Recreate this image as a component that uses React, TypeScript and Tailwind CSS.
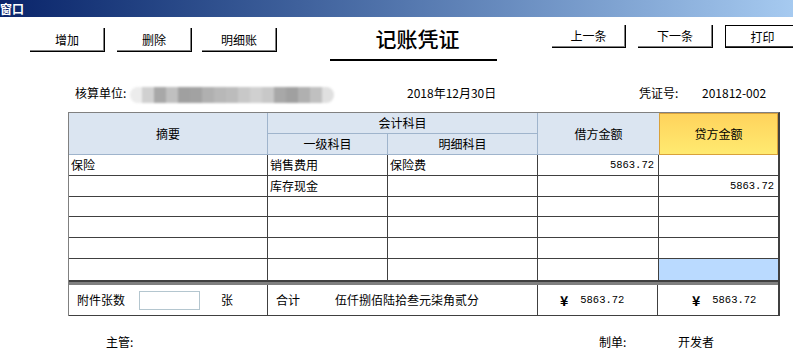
import React from "react";

const blurBlocks = [
  "#ececec", "#d0d0d0", "#a8a8a8", "#c0c0c0", "#a0a0a0", "#a2a2a2", "#b0b0b0", "#b8b8b8",
  "#bcbcbc", "#c8c8c8", "#d0d0d0", "#c8c8c8", "#a8a8a8", "#a0a0a0", "#b0b0b0", "#c0c0c0", "#e0e0e0",
];

function Btn({ label, className }: { label: string; className: string }) {
  return (
    <div
      className={
        "shrink-0 bg-white border-r border-b border-black shadow-[inset_-1px_-1px_0_#808080] flex items-center justify-center text-[12px] leading-[14px] text-black " +
        className
      }
    >
      {label}
    </div>
  );
}

const H = "bg-[#dbe5f1] border-r border-b border-[#9fb4cc] flex items-center justify-center text-[12px] leading-[14px]";
const C = "border-r border-b border-[#404040] flex items-center px-[2px] text-[12px] leading-[14px]";
const CL = "border-b border-[#404040] flex items-center px-[2px] text-[12px] leading-[14px]";
const M = "font-['Liberation_Mono',monospace] text-[10.5px]";

export default function App() {
  const rows = [
    ["保险", "销售费用", "保险费", "5863.72", ""],
    ["", "库存现金", "", "", "5863.72"],
    ["", "", "", "", ""],
    ["", "", "", "", ""],
    ["", "", "", "", ""],
    ["", "", "", "", ""],
  ];
  return (
    <div className="w-[793px] h-[355px] overflow-hidden bg-white text-black font-['Noto_Sans_CJK_SC',sans-serif]">
      {/* title bar */}
      <div className="h-[17px] bg-gradient-to-r from-[#0a246a] to-[#a6caf0] flex items-center">
        <span className="text-white font-bold text-[12px] leading-[14px]">窗口</span>
      </div>

      {/* toolbar */}
      <div className="flex items-start h-[45px]">
        <Btn label="增加" className="ml-[30px] mt-[11px] w-[75px] h-[24px]" />
        <Btn label="删除" className="ml-[12px] mt-[11px] w-[75px] h-[24px]" />
        <Btn label="明细账" className="ml-[10px] mt-[11px] w-[75px] h-[24px]" />
        <div className="shrink-0 ml-[53px] mt-[8px] w-[167px] h-[36px] border-b-2 border-black flex justify-center pt-[1px] pl-[8px]">
          <span className="text-[21px] leading-[24px] font-medium">记账凭证</span>
        </div>
        <Btn label="上一条" className="ml-[55px] mt-[8px] w-[74px] h-[23px]" />
        <Btn label="下一条" className="ml-[12px] mt-[8px] w-[75px] h-[23px]" />
        <div className="shrink-0 ml-[12px] mt-[8px] w-[75px] h-[23px] bg-white border border-black shadow-[inset_-1px_-1px_0_#404040] flex items-center justify-center text-[12px] leading-[14px]">
          打印
        </div>
      </div>

      {/* info row */}
      <div className="flex items-end h-[50px] pb-[12px] text-[12px] leading-[14px]">
        <span className="ml-[75px] w-[55px] shrink-0">核算单位:</span>
        <div className="shrink-0 flex h-[16px] w-[204px] mb-[-3px] rounded-full overflow-hidden blur-[1px]">
          {blurBlocks.map((c, i) => (
            <div key={i} className="h-full w-[12px]" style={{ background: c }} />
          ))}
        </div>
        <span className="ml-[73px] w-[232px] shrink-0">2018年12月30日</span>
        <span className="w-[63px] shrink-0">凭证号:</span>
        <span className="shrink-0">201812-002</span>
      </div>

      {/* table */}
      <div className="ml-[68px] w-[712px] border-t border-l border-t-[#808080] border-l-[#808080] border-r-2 border-r-[#404040]">
        <div className="grid grid-cols-[199px_120px_150px_121px_119px] grid-rows-[21px_21px_21px_21px_20px_21px_21px_21px]">
          <div className={H + " row-span-2"}>摘要</div>
          <div className={H + " col-span-2"}>会计科目</div>
          <div className={"bg-[#dbe5f1] border-b border-[#9fb4cc] flex items-center justify-center text-[12px] leading-[14px] row-span-2"}>借方金额</div>
          <div className="row-span-2 border border-[#d9a13a] bg-gradient-to-b from-[#ffd35c] to-[#ffea70] flex items-center justify-center text-[12px] leading-[14px]">
            贷方金额
          </div>
          <div className={H}>一级科目</div>
          <div className={H}>明细科目</div>

          {rows.map((r, ri) => (
            <React.Fragment key={ri}>
              <div className={C + (ri === 5 ? " border-b-0" : "")}>{r[0]}</div>
              <div className={C + (ri === 5 ? " border-b-0" : "")}>{r[1]}</div>
              <div className={C + (ri === 5 ? " border-b-0" : "")}>{r[2]}</div>
              <div className={C + " justify-end pr-[4px]" + (ri === 5 ? " border-b-0" : "")}>
                <span className={M}>{r[3]}</span>
              </div>
              <div className={CL + " justify-end pr-[4px]" + (ri === 5 ? " border-b-0 bg-[#badaff]" : "")}>
                <span className={M}>{r[4]}</span>
              </div>
            </React.Fragment>
          ))}
        </div>
        <div className="h-[5px] border-t-2 border-[#404040] bg-[#808080]" />
        <div className="grid grid-cols-[199px_270px_120px_120px] h-[31px] border-b border-[#404040] text-[12px] leading-[14px]">
          <div className="border-r border-[#404040] flex items-center pl-[8px]">
            <span className="w-[62px] shrink-0">附件张数</span>
            <div className="w-[61px] h-[19px] border border-[#b4c6cf] shrink-0" />
            <span className="ml-[21px]">张</span>
          </div>
          <div className="border-r border-[#404040] flex items-center pl-[8px]">
            <span className="w-[59px] shrink-0">合计</span>
            <span>伍仟捌佰陆拾叁元柒角贰分</span>
          </div>
          <div className="border-r border-[#404040] flex items-center pl-[22px]">
            <span className="text-[14px] font-bold">¥</span>
            <span className={M + " ml-[12px]"}>5863.72</span>
          </div>
          <div className="flex items-center pl-[34px]">
            <span className="text-[14px] font-bold">¥</span>
            <span className={M + " ml-[12px]"}>5863.72</span>
          </div>
        </div>
      </div>

      {/* signature row */}
      <div className="flex items-start pt-[19px] text-[12px] leading-[14px]">
        <span className="ml-[106px] w-[493px] shrink-0">主管:</span>
        <span className="w-[79px] shrink-0">制单:</span>
        <span>开发者</span>
      </div>
    </div>
  );
}
